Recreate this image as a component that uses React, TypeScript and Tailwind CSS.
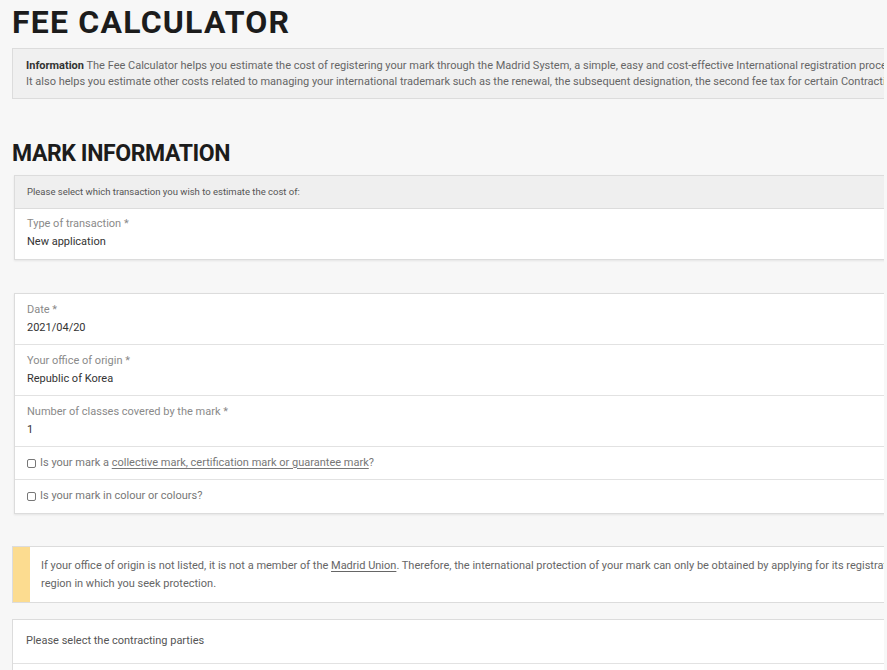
const font = { fontFamily: "Roboto, 'Liberation Sans', sans-serif" };

const FieldRow = ({ label, value }: { label: string; value: string }) => (
  <div className="h-[51px] border-b border-[#e2e2e2] bg-white px-[12px] pt-[7px]">
    <div className="text-[11px] leading-[17px] text-[#8a8a8a]">{label}</div>
    <div className="mt-[1px] text-[11px] leading-[17px] text-[#333]">{value}</div>
  </div>
);

const CheckRow = ({ children, last = false }: { children: React.ReactNode; last?: boolean }) => (
  <div
    className={`flex h-[33px] items-center gap-[4px] bg-white px-[12px] text-[11px] text-[#777] ${
      last ? "" : "border-b border-[#e2e2e2]"
    }`}
  >
    <span className="inline-block h-[9px] w-[9px] rounded-[2px] border border-[#777]" />
    <span>{children}</span>
  </div>
);

export default function App() {
  return (
    <div className="min-h-screen bg-[#f7f7f7] pl-[12px]" style={font}>
      <div className="w-[872px] overflow-hidden">
        <div className="w-[1100px]">
          {/* Title */}
          <h1 className="mt-[3px] h-[38px] text-[32px] font-bold leading-[38px] tracking-[1.2px] text-[#1c1c1c]">
            FEE CALCULATOR
          </h1>

          {/* Info box */}
          <div className="mt-[7px] border border-[#dcdcdc] bg-[#f0f0f0] px-[13px] pb-[8px] pt-[9px] text-[11px] leading-[16px] text-[#666] whitespace-nowrap">
            <div>
              <span className="font-bold text-[#333]">Information</span> The Fee Calculator helps you estimate the cost
              of registering your mark through the Madrid System, a simple, easy and cost-effective International
              registration procedure for the protection of trademarks worldwide.
            </div>
            <div>
              It also helps you estimate other costs related to managing your international trademark such as the
              renewal, the subsequent designation, the second fee tax for certain Contracting Parties, and more.
            </div>
          </div>

          {/* Section heading */}
          <h2 className="mt-[41px] h-[28px] text-[23px] font-bold leading-[28px] tracking-[-0.4px] text-[#1c1c1c]">
            MARK INFORMATION
          </h2>

          {/* Transaction panel */}
          <div className="ml-[2px] mt-[7px] border border-[#dcdcdc] shadow-[0_1px_2px_rgba(0,0,0,0.08)]">
            <div className="flex h-[33px] items-center border-b border-[#dcdcdc] bg-[#efefef] px-[12px] text-[9.5px] text-[#555]">
              Please select which transaction you wish to estimate the cost of:
            </div>
            <div className="h-[50px] bg-white px-[12px] pt-[6px]">
              <div className="text-[11px] leading-[17px] text-[#8a8a8a]">Type of transaction *</div>
              <div className="mt-[1px] text-[11px] leading-[17px] text-[#333]">New application</div>
            </div>
          </div>

          {/* Mark details panel */}
          <div className="ml-[2px] mt-[33px] border border-[#dcdcdc] shadow-[0_1px_2px_rgba(0,0,0,0.08)]">
            <FieldRow label="Date *" value="2021/04/20" />
            <FieldRow label="Your office of origin *" value="Republic of Korea" />
            <FieldRow label="Number of classes covered by the mark *" value="1" />
            <CheckRow>
              Is your mark a <span className="underline underline-offset-2">collective mark, certification mark or guarantee mark</span>?
            </CheckRow>
            <CheckRow last>Is your mark in colour or colours?</CheckRow>
          </div>

          {/* Notice */}
          <div className="mt-[32px] flex border border-[#dcdcdc] bg-white">
            <div className="w-[17px] shrink-0 bg-[#fcdc90]" />
            <div className="pb-[9px] pl-[11px] pt-[10px] text-[11px] leading-[18px] text-[#666]">
              <div className="whitespace-nowrap">
                If your office of origin is not listed, it is not a member of the{" "}
                <span className="underline underline-offset-2">Madrid Union</span>. Therefore, the international
                protection of your mark can only be obtained by applying for its registration directly with the office
                of each country or
              </div>
              <div>region in which you seek protection.</div>
            </div>
          </div>

          {/* Contracting parties */}
          <div className="mt-[16px] border border-[#dcdcdc] bg-white">
            <div className="flex h-[44px] items-center border-b border-[#e2e2e2] px-[13px] text-[11px] text-[#555]">
              Please select the contracting parties
            </div>
            <div className="h-[40px] bg-white" />
          </div>
        </div>
      </div>
    </div>
  );
}
